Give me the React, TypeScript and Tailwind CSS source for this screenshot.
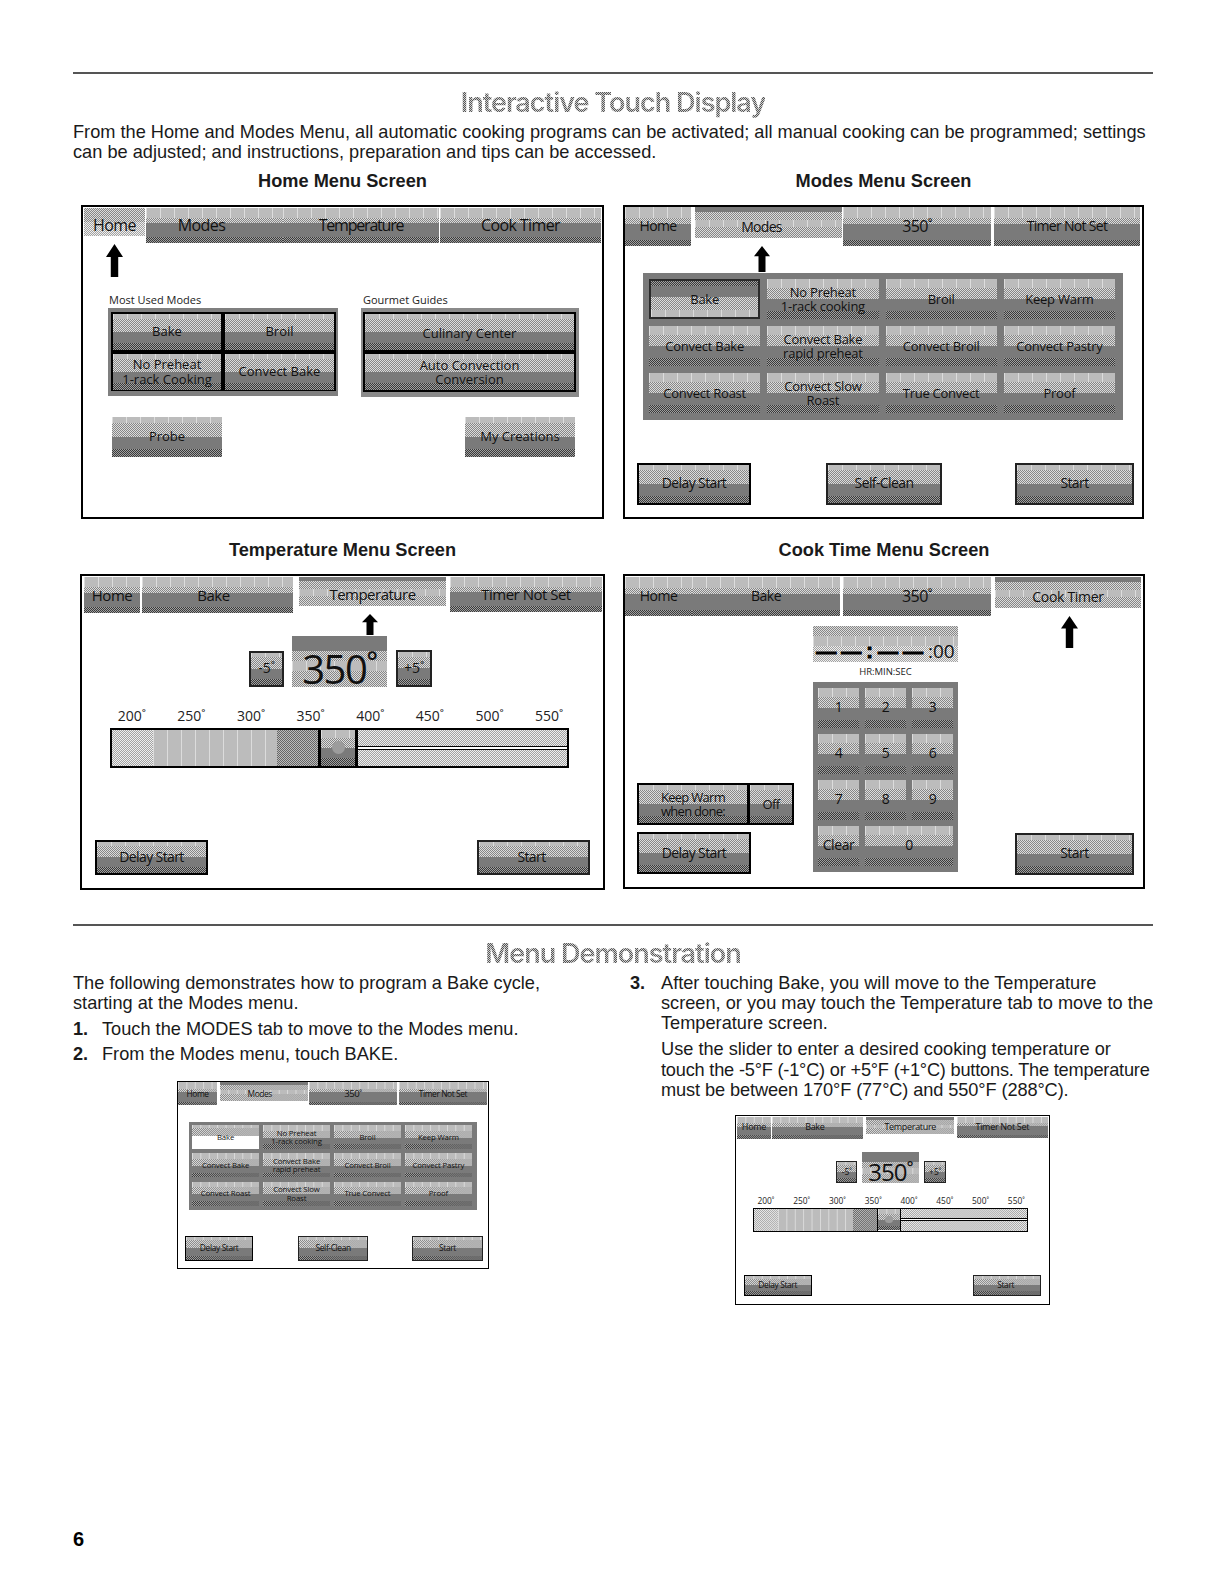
import type { ReactNode } from "react";

const light = "bg-[#bcbcbc] bg-[linear-gradient(90deg,#dcdcdc_1px,transparent_1px)] bg-[length:14px_100%]";
const dith = "dither bg-[repeating-conic-gradient(#868686_0_25%,#dcdcdc_0_50%)] bg-[length:2px_2px]";
const paleDith = "dither bg-[repeating-conic-gradient(#a2a2a2_0_25%,#efefef_0_50%)] bg-[length:2px_2px]";
const midDith = "dither bg-[repeating-conic-gradient(#666666_0_25%,#bcbcbc_0_50%)] bg-[length:2px_2px]";
const flat = "bg-[#7a7a7a]";
const dark = "dither bg-[repeating-conic-gradient(#3a3a3a_0_25%,#a0a0a0_0_50%)] bg-[length:2px_2px]";

// small copies of the screens are zoomed to 0.6, this keeps the dither at 2px there
const small = "[zoom:0.6] [&_.dither]:bg-[length:3.3333px_3.3333px]";

const bands: Record<string, [string, string][]> = {
  tab: [["h-[30%]", light], ["h-[15%]", dith], ["h-[40%]", flat], ["h-[15%]", dark]],
  btn: [["h-[15%]", light], ["h-[35%]", dith], ["h-[32%]", flat], ["h-[18%]", dark]],
  cell: [["h-[24%]", light], ["h-[28%]", dith], ["h-[28%]", flat], ["h-[20%]", dark]],
  active: [["h-[16%]", flat], ["h-[28%]", dith], ["h-[22%]", light], ["h-[34%]", dith]],
  homeActive: [["h-[50%]", dith], ["h-[50%]", paleDith]],
  selected: [["h-[14%]", dark], ["h-[32%]", flat], ["h-[36%]", dith], ["h-[18%]", light]],
  selectedWhite: [["h-[10%]", light], ["h-[35%]", dith], ["h-[55%]", "bg-white"]],
  display: [["h-[30%]", flat], ["h-[20%]", dith], ["h-[20%]", light], ["h-[30%]", dith]],
  timer: [["h-[28%]", dith], ["h-[30%]", light], ["h-[42%]", paleDith]],
};

function Glossy({
  kind = "btn",
  className = "",
  children,
}: {
  kind?: string;
  className?: string;
  children?: ReactNode;
}) {
  return (
    <div className={`relative shrink-0 ${className}`}>
      <div className="absolute inset-0 flex flex-col">
        {bands[kind].map(([h, bg], i) => (
          <div key={i} className={`${h} ${bg}`} />
        ))}
      </div>
      <div className="relative flex h-full items-center justify-center text-center text-[#111]">{children}</div>
    </div>
  );
}

function Arrow({ className = "", hidden = false }: { className?: string; hidden?: boolean }) {
  return (
    <svg viewBox="0 0 16 28" preserveAspectRatio="none" className={`block shrink-0 ${className}`}>
      {!hidden && <polygon points="8,0 16,11 11.5,11 11.5,28 4.5,28 4.5,11 0,11" fill="#000" />}
    </svg>
  );
}

function HomeScreen() {
  return (
    <div className="box-border h-[314px] w-[523px] shrink-0 border-2 border-black bg-white p-px">
      <div className="flex h-[35px] items-start text-[16px] leading-[18px] tracking-[-0.6px]">
        <Glossy kind="homeActive" className="h-[28px] w-[61px] pt-[6px]">Home</Glossy>
        <Glossy kind="tab" className="ml-px h-[35px] w-[137px] pr-[26px]">Modes</Glossy>
        <Glossy kind="tab" className="h-[35px] w-[156px] tracking-[-1.2px]">Temperature</Glossy>
        <Glossy kind="tab" className="ml-px h-[35px] w-[161px]">Cook Timer</Glossy>
      </div>
      <Arrow className="ml-[22px] mt-px h-[33px] w-[17px]" />
      <div className="ml-[24px] mt-[16px] flex gap-[23px]">
        <div className="w-[230px]">
          <div className="ml-px h-[15px] text-[11px] leading-[14px] text-[#222]">Most Used Modes</div>
          <div className="box-border h-[88px] bg-[#7f7f7f] pb-[5px] pl-[3px] pr-[2px] pt-[4px] text-[13px] leading-[15px]">
            <div className="grid h-[79px] grid-cols-[108px_109px] grid-rows-[36px_36px] gap-[4px] bg-black pb-px pl-[2px] pr-[2px] pt-[2px]">
              <Glossy>Bake</Glossy>
              <Glossy>Broil</Glossy>
              <Glossy>No Preheat<br />1-rack Cooking</Glossy>
              <Glossy>Convect Bake</Glossy>
            </div>
          </div>
        </div>
        <div className="w-[218px]">
          <div className="ml-[2px] h-[15px] text-[11px] leading-[14px] text-[#222]">Gourmet Guides</div>
          <div className="box-border h-[89px] bg-[#8a8a8a] pb-[5px] pl-[2px] pr-[3px] pt-[4px] text-[13px] leading-[14px]">
            <div className="grid h-[80px] grid-rows-[36px_36px] gap-[4px] bg-black p-[2px]">
              <Glossy className="pt-[3px]">Culinary Center</Glossy>
              <Glossy>Auto Convection<br />Conversion</Glossy>
            </div>
          </div>
        </div>
      </div>
      <div className="ml-[28px] mt-[20px] flex text-[13px]">
        <Glossy className="h-[40px] w-[110px]">Probe</Glossy>
        <Glossy className="ml-[243px] h-[40px] w-[110px]">My Creations</Glossy>
      </div>
    </div>
  );
}

function ModesScreen({ mini = false }: { mini?: boolean }) {
  const modes = [
    "No Preheat\n1-rack cooking",
    "Broil",
    "Keep Warm",
    "Convect Bake",
    "Convect Bake\nrapid preheat",
    "Convect Broil",
    "Convect Pastry",
    "Convect Roast",
    "Convect Slow\nRoast",
    "True Convect",
    "Proof",
  ];
  return (
    <div className="box-border h-[314px] w-[521px] border-2 border-black bg-white">
      <div className="flex h-[39px] items-start text-[14px] leading-[16px] tracking-[-0.7px]">
        <Glossy kind="tab" className="h-[39px] w-[66px]">Home</Glossy>
        <Glossy kind="active" className="ml-[4px] h-[31px] w-[147px] pr-[14px] pt-[10px]">Modes</Glossy>
        <Glossy kind="tab" className="ml-px h-[39px] w-[148px] text-[16px]">350˚</Glossy>
        <Glossy kind="tab" className="ml-[3px] h-[39px] w-[146px]">Timer Not Set</Glossy>
      </div>
      <Arrow hidden={mini} className="ml-[129px] h-[26px] w-[16px]" />
      <div className="ml-[18px] mt-px box-border h-[147px] w-[480px] bg-[#7a7a7a] pl-[6px] pt-[6px] text-[13px] leading-[14px] tracking-[-0.25px]">
        <div className="grid w-[466px] grid-cols-4 grid-rows-[40px_40px_40px] gap-x-[7px] gap-y-[7px]">
          <Glossy kind={mini ? "selectedWhite" : "selected"} className={mini ? "" : "border-2 border-[#2a2a2a]"}>Bake</Glossy>
          {modes.map((m) => (
            <Glossy key={m} kind="cell" className="whitespace-pre-line">{m}</Glossy>
          ))}
        </div>
      </div>
      <div className="ml-[12px] mt-[43px] flex text-[14px] tracking-[-0.6px]">
        <Glossy className="box-border h-[42px] w-[114px] border-2 border-black">Delay Start</Glossy>
        <Glossy className="ml-[75px] box-border h-[42px] w-[116px] border-2 border-[#222]">Self-Clean</Glossy>
        <Glossy className="ml-[73px] box-border h-[42px] w-[119px] border-2 border-[#222]">Start</Glossy>
      </div>
    </div>
  );
}

function Slider() {
  return (
    <div className="ml-[28px] mt-[4px] box-border flex h-[40px] w-[459px] border-2 border-black">
      <div className={`w-[41px] ${paleDith}`} />
      <div className={`w-[124px] ${light}`} />
      <div className={`w-[41px] ${midDith}`} />
      <Glossy kind="cell" className="box-border w-[40px] border-x-[3px] border-black">
        <div className="h-[13px] w-[13px] rounded-full bg-[#9c9c9c]" />
      </Glossy>
      <div className="flex flex-1 flex-col">
        <div className={`flex-1 ${paleDith}`} />
        <div className="h-[4px] border-y border-black bg-white" />
        <div className={`flex-1 ${paleDith}`} />
      </div>
    </div>
  );
}

function TempScreen({ mini = false }: { mini?: boolean }) {
  const temps = ["200˚", "250˚", "300˚", "350˚", "400˚", "450˚", "500˚", "550˚"];
  return (
    <div className="box-border h-[316px] w-[525px] border-2 border-black bg-white pt-px">
      <div className="ml-[2px] flex h-[36px] items-start text-[15px] leading-[18px] tracking-[-0.5px]">
        <Glossy kind="tab" className="h-[36px] w-[56px]">Home</Glossy>
        <Glossy kind="tab" className="ml-[2px] h-[36px] w-[151px] pr-[8px]">Bake</Glossy>
        <Glossy kind="active" className="ml-[6px] h-[29px] w-[147px] pt-[6px]">Temperature</Glossy>
        <Glossy kind="tab" className="ml-[4px] h-[35px] w-[152px]">Timer Not Set</Glossy>
      </div>
      <Arrow hidden={mini} className="ml-[280px] mt-px h-[21px] w-[16px]" />
      <div className="ml-[167px] mt-px flex items-end">
        <Glossy kind="btn" className="box-border h-[36px] w-[35px] border-2 border-[#222] text-[14px]">-5˚</Glossy>
        <Glossy kind="display" className="ml-[8px] h-[51px] w-[95px] pt-[14px] text-[40px] leading-[37px] tracking-[-1.5px] text-black">350˚</Glossy>
        <Glossy kind="btn" className="ml-[9px] box-border h-[37px] w-[36px] border-2 border-[#222] text-[14px]">+5˚</Glossy>
      </div>
      <div className="ml-[20px] mt-[21px] grid h-[16px] w-[477px] grid-cols-8 text-center text-[14px] leading-[16px] text-[#222]">
        {temps.map((t) => (
          <div key={t}>{t}</div>
        ))}
      </div>
      <Slider />
      <div className="ml-[13px] mt-[72px] flex text-[14px] tracking-[-0.6px]">
        <Glossy className="box-border h-[35px] w-[113px] border-2 border-black">Delay Start</Glossy>
        <Glossy className="ml-[269px] box-border h-[35px] w-[113px] border-2 border-[#222] pr-[4px]">Start</Glossy>
      </div>
    </div>
  );
}

function CookScreen() {
  const keys = ["1", "2", "3", "4", "5", "6", "7", "8", "9", "Clear"];
  return (
    <div className="box-border h-[315px] w-[522px] border-2 border-black bg-white pt-px">
      <div className="flex h-[39px] items-start text-[14px] leading-[16px] tracking-[-0.5px]">
        <Glossy kind="tab" className="h-[39px] w-[67px]">Home</Glossy>
        <Glossy kind="tab" className="h-[39px] w-[148px]">Bake</Glossy>
        <Glossy kind="tab" className="ml-[3px] h-[39px] w-[148px] text-[16px]">350˚</Glossy>
        <Glossy kind="active" className="ml-[4px] h-[31px] w-[146px] pt-[10px] tracking-[-0.3px]">Cook Timer</Glossy>
      </div>
      <div className="flex">
        <div className="ml-[12px] mt-[167px] flex w-[157px] flex-col gap-[7px] text-[14px] leading-[14px] tracking-[-0.6px]">
          <div className="box-border flex h-[42px] border-2 border-black bg-black text-[13px] tracking-[-0.7px]">
            <Glossy className="w-[108px]">Keep Warm<br />when done:</Glossy>
            <Glossy className="ml-[3px] flex-1">Off</Glossy>
          </div>
          <Glossy className="box-border h-[42px] w-[114px] border-2 border-black">Delay Start</Glossy>
        </div>
        <div className="ml-[19px] mt-[10px] w-[145px]">
          <Glossy kind="timer" className="h-[36px] pt-[14px]">
            <span className="font-['Liberation_Sans',sans-serif] text-[20px] font-bold leading-[20px] tracking-[5px] text-black [-webkit-text-stroke:1px_black]">——:——</span>
            <span className="text-[19px] leading-[20px]">:00</span>
          </Glossy>
          <div className="mt-[3px] h-[14px] text-center text-[9.5px] leading-[14px] text-[#222]">HR:MIN:SEC</div>
          <div className="mt-[3px] box-border h-[190px] bg-[#7a7a7a] pl-[5px] pt-[6px] text-[14px] tracking-[-0.4px]">
            <div className="grid w-[135px] grid-cols-3 grid-rows-[40px_40px_40px_40px] gap-[6px]">
              {keys.map((k) => (
                <Glossy key={k} kind="cell">{k}</Glossy>
              ))}
              <Glossy kind="cell" className="col-span-2">0</Glossy>
            </div>
          </div>
        </div>
        <div className="ml-[57px]">
          <Arrow className="ml-[46px] h-[32px] w-[17px]" />
          <Glossy className="mt-[185px] box-border h-[42px] w-[119px] border-2 border-[#222] text-[14px] tracking-[-0.5px]">Start</Glossy>
        </div>
      </div>
    </div>
  );
}

function Num({ n, className, children }: { n: string; className: string; children: ReactNode }) {
  return (
    <div className="flex whitespace-nowrap">
      <div className={`shrink-0 font-bold ${className}`}>{n}</div>
      <div>{children}</div>
    </div>
  );
}

function Heading({ children }: { children: ReactNode }) {
  return (
    <div className="text-center font-['Inter',sans-serif] text-[27px] font-semibold leading-[30px] tracking-[-1px]">
      <span className="bg-[repeating-conic-gradient(#555555_0_25%,#cfcfcf_0_50%)] bg-[length:2px_2px] bg-clip-text text-transparent">{children}</span>
    </div>
  );
}

function Caption({ className = "", children }: { className?: string; children: ReactNode }) {
  return <div className={`text-center text-[18.2px] font-bold leading-[20px] ${className}`}>{children}</div>;
}

export default function App() {
  return (
    <div className="box-border h-[1584px] w-[1224px] overflow-hidden bg-white pl-[73px] pr-[71px] pt-[72px] font-['Liberation_Sans',sans-serif] text-[18.2px] leading-[20.3px] text-[#1a1a1a]">
      <div className="h-[2px] bg-[#555]" />
      <div className="mt-[14px]">
        <Heading>Interactive Touch Display</Heading>
      </div>
      <p className="mt-[4px]">
        From the Home and Modes Menu, all automatic cooking programs can be activated; all manual cooking can be programmed; settings
        <br />
        can be adjusted; and instructions, preparation and tips can be accessed.
      </p>
      <div className="mt-[8px] flex">
        <Caption className="ml-[8px] w-[523px]">Home Menu Screen</Caption>
        <Caption className="ml-[19px] w-[521px]">Modes Menu Screen</Caption>
      </div>
      <div className="mt-[14px] font-['Open_Sans',sans-serif] text-[#1c1c1c]">
        <div className="ml-[8px] flex gap-[19px]">
          <HomeScreen />
          <ModesScreen />
        </div>
      </div>
      <div className="mt-[21px] flex">
        <Caption className="ml-[7px] w-[525px]">Temperature Menu Screen</Caption>
        <Caption className="ml-[18px] w-[522px]">Cook Time Menu Screen</Caption>
      </div>
      <div className="mt-[14px] font-['Open_Sans',sans-serif] text-[#1c1c1c]">
        <div className="ml-[7px] flex gap-[18px]">
          <TempScreen />
          <CookScreen />
        </div>
      </div>
      <div className="mt-[34px] h-[2px] bg-[#555]" />
      <div className="mt-[13px]">
        <Heading>Menu Demonstration</Heading>
      </div>
      <div className="mt-[4px] flex">
        <div className="w-[557px] shrink-0">
          <p>
            The following demonstrates how to program a Bake cycle,
            <br />
            starting at the Modes menu.
          </p>
          <div className="mt-[6px]">
            <Num n="1." className="w-[29px]">Touch the MODES tab to move to the Modes menu.</Num>
          </div>
          <div className="mt-[5px]">
            <Num n="2." className="w-[29px]">From the Modes menu, touch BAKE.</Num>
          </div>
          <div className={`ml-[173px] mt-[27px] w-fit font-['Open_Sans',sans-serif] text-[#1c1c1c] ${small}`}>
            <ModesScreen mini />
          </div>
        </div>
        <div className="flex-1">
          <Num n="3." className="w-[31px]">
            After touching Bake, you will move to the Temperature
            <br />
            screen, or you may touch the Temperature tab to move to the
            <br />
            Temperature screen.
            <p className="mt-[6px]">
              Use the slider to enter a desired cooking temperature or
              <br />
              <span className="tracking-[-0.2px]">touch the -5°F (-1°C) or +5°F (+1°C) buttons. The temperature</span>
              <br />
              <span className="tracking-[-0.1px]">must be between 170°F (77°C) and 550°F (288°C).</span>
            </p>
          </Num>
          <div className={`ml-[175px] mt-[25px] w-fit font-['Open_Sans',sans-serif] text-[#1c1c1c] ${small}`}>
            <TempScreen mini />
          </div>
        </div>
      </div>
      <div className="mt-[222px] text-[20px] font-bold leading-[24px] text-black">6</div>
    </div>
  );
}
